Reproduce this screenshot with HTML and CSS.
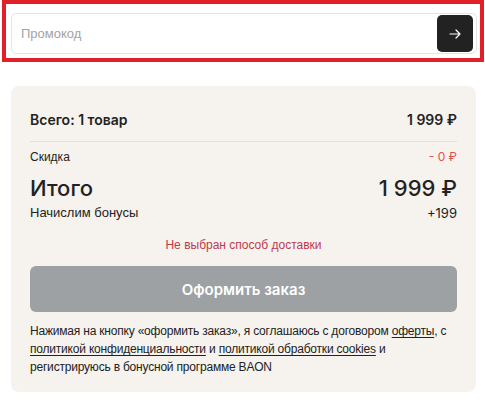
FILE: index.html
```html
<!DOCTYPE html>
<html lang="ru">
<head>
    <meta charset="UTF-8">
    <meta name="viewport" content="width=device-width, initial-scale=1.0">
    <title>Корзина</title>
    <link rel="stylesheet" href="styles.css">
</head>
<body>
    <div class="promo-frame">
        <div class="promo">
            <input type="text" class="promo-input" placeholder="Промокод">
            <button class="promo-btn" aria-label="Применить">
                <svg width="12" height="10" viewBox="0 0 12 10" fill="none" stroke="#fff" stroke-width="1.2" stroke-linecap="round" stroke-linejoin="round">
                    <path d="M1 5h10M7 1l4 4-4 4"/>
                </svg>
            </button>
        </div>
    </div>

    <div class="summary">
        <div class="row row-total-items">
            <span>Всего: 1 товар</span>
            <span>1 999 ₽</span>
        </div>
        <div class="row row-discount">
            <span>Скидка</span>
            <span class="minus">- 0 ₽</span>
        </div>
        <div class="row row-grand">
            <span>Итого</span>
            <span>1 999 ₽</span>
        </div>
        <div class="row row-bonus">
            <span>Начислим бонусы</span>
            <span class="bonus-value">+199</span>
        </div>
        <p class="warning">Не выбран способ доставки</p>
        <button class="checkout" disabled>Оформить заказ</button>
        <p class="legal">Нажимая на кнопку «оформить заказ», я соглашаюсь с договором <a href="#">оферты</a>, с<br><a href="#">политикой конфиденциальности</a> и <a href="#">политикой обработки cookies</a> и<br>регистрируюсь в бонусной программе BAON</p>
    </div>
</body>
</html>
```

FILE: styles.css
```css
* {
    margin: 0;
    padding: 0;
    box-sizing: border-box;
}

body {
    background: #ffffff;
    font-family: "Liberation Sans", Arial, sans-serif;
    color: #222222;
}

.promo-frame {
    width: 482px;
    height: 62px;
    margin-left: 2px;
    border: 4px solid #e3202a;
    padding: 9px 3px 0 5px;
}

.promo {
    display: flex;
    align-items: center;
    height: 41px;
    border: 1px solid #e4e4e4;
    border-radius: 5px;
    padding: 2px 3px 2px 9px;
    background: #ffffff;
}

.promo-input {
    flex: 1;
    border: none;
    outline: none;
    font-family: "Liberation Sans", Arial, sans-serif;
    font-size: 13px;
    color: #222;
    background: transparent;
}

.promo-input::placeholder {
    color: #a3a3a3;
}

.promo-btn {
    width: 36px;
    height: 37px;
    border: none;
    border-radius: 5px;
    background: #222222;
    display: flex;
    align-items: center;
    justify-content: center;
    cursor: pointer;
}

.summary {
    width: 465px;
    margin: 24px 0 0 11px;
    background: #f6f3ef;
    border-radius: 8px;
    padding: 24px 19px 16px;
}

.row {
    display: flex;
    justify-content: space-between;
    align-items: center;
}

.row-total-items {
    font-family: Inter, "Noto Sans", sans-serif;
    font-weight: 600;
    font-size: 14px;
    line-height: 20px;
    padding-bottom: 11px;
    border-bottom: 1px solid #e4e0db;
}

.row-discount {
    margin-top: 7px;
    font-size: 12px;
    line-height: 16px;
}

.minus {
    color: #e0524f;
    font-family: Inter, "Noto Sans", sans-serif;
}

.row-grand {
    margin-top: 9px;
    font-family: Inter, "Noto Sans", sans-serif;
    font-weight: 500;
    font-size: 22px;
    line-height: 28px;
}

.row-bonus {
    margin-top: 2px;
    font-size: 13px;
    line-height: 18px;
}

.bonus-value {
    font-family: Inter, "Noto Sans", sans-serif;
}

.warning {
    margin-top: 15px;
    text-align: center;
    font-size: 12px;
    line-height: 16px;
    color: #bd3a4c;
}

.checkout {
    display: block;
    width: 100%;
    height: 46px;
    margin-top: 13px;
    border: none;
    border-radius: 6px;
    background: #9da1a3;
    color: #ffffff;
    font-family: Inter, "Noto Sans", sans-serif;
    font-weight: 600;
    font-size: 15px;
}

.legal {
    margin-top: 10px;
    font-size: 12px;
    line-height: 18px;
    letter-spacing: -0.2px;
    color: #222222;
}

.legal a {
    color: #222222;
    text-decoration: underline;
    text-underline-offset: 2px;
}
```
